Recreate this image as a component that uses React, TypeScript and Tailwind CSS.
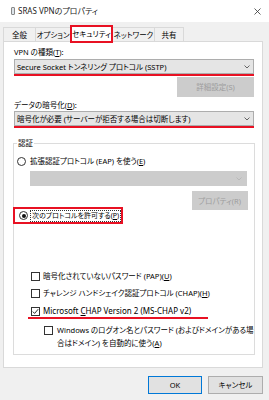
import React from 'react';

const font = "font-['Noto_Sans','Noto_Sans_CJK_JP',sans-serif] [font-feature-settings:'palt']";

function Chevron({ color = '#555' }: { color?: string }) {
  return (
    <svg width="6" height="4" viewBox="0 0 6 4" className="shrink-0">
      <polyline points="0.5,0.5 3,3 5.5,0.5" fill="none" stroke={color} strokeWidth="0.9" />
    </svg>
  );
}

function Radio({ checked = false }: { checked?: boolean }) {
  return (
    <span className="w-[9px] h-[9px] rounded-full border border-[#333] bg-white flex items-center justify-center shrink-0">
      {checked && <span className="w-[4px] h-[4px] rounded-full bg-[#111]" />}
    </span>
  );
}

function Check({ checked = false }: { checked?: boolean }) {
  return (
    <span className="w-[9px] h-[9px] border border-[#333] bg-white flex items-center justify-center shrink-0">
      {checked && (
        <svg width="7" height="7" viewBox="0 0 7 7">
          <polyline points="0.8,3.6 2.6,5.4 6.2,1.2" fill="none" stroke="#111" strokeWidth="0.9" />
        </svg>
      )}
    </span>
  );
}

const tabs = [
  { label: '全般', w: 'w-[32px]' },
  { label: 'オプション', w: 'w-[35px]' },
  { label: 'セキュリティ', w: 'w-[43px]', active: true },
  { label: 'ネットワーク', w: 'w-[41px]' },
  { label: '共有', w: 'w-[30px]' },
];

export default function App() {
  return (
    <div className={`w-[269px] h-[400px] bg-[#f0f0f0] flex flex-col text-[7.5px] leading-[12px] text-black overflow-hidden whitespace-nowrap ${font}`}>
      {/* title bar */}
      <div className="h-[22px] bg-white flex items-center shrink-0">
        <span className="ml-[11px] w-[4px] h-[8px] border border-[#888] bg-[#dde4ea] rounded-[1px]" />
        <span className="ml-[3px] text-[8px] text-[#222]">SRAS VPNのプロパティ</span>
        <svg width="7" height="7" viewBox="0 0 7 7" className="ml-auto mr-[8px]">
          <path d="M0.5 0.5 L6.5 6.5 M6.5 0.5 L0.5 6.5" stroke="#333" strokeWidth="0.8" />
        </svg>
      </div>

      {/* tabs */}
      <div className="h-[19px] flex items-end pl-[3px] shrink-0">
        {tabs.map((t, i) =>
          t.active ? (
            <div
              key={t.label}
              className={`${t.w} h-[18px] -mb-[2px] relative z-10 bg-white border-2 border-[#e81123] flex items-center justify-center`}
            >
              {t.label}
            </div>
          ) : (
            <div
              key={t.label}
              className={`${t.w} h-[14px] border-t border-[#d9d9d9] ${i === 3 ? '' : 'border-l'} ${i === tabs.length - 1 ? 'border-r' : ''} flex items-center justify-center`}
            >
              {t.label}
            </div>
          )
        )}
      </div>

      {/* panel */}
      <div className="ml-[3px] w-[260px] h-[327px] bg-white border border-[#d9d9d9] flex flex-col pl-[10px] pr-[8px] pt-[4px] shrink-0">
        <div className="h-[12px]">VPN の種類(<span className="underline">T</span>):</div>
        <div className="mt-[1px] h-[15px] bg-[#e5e5e5] border border-[#adadad] flex items-center pl-[2px] pr-[3px]">
          <span className="flex-1">Secure Socket トンネリング プロトコル (SSTP)</span>
          <Chevron />
        </div>
        <div className="h-[2px] bg-[#e81123]" />
        <div className="mt-[1px] self-end w-[77px] h-[20px] bg-[#cccccc] border border-[#cccccc] text-[#9d9d9d] flex items-center justify-center">
          詳細設定(S)
        </div>
        <div className="mt-[2px] h-[12px]">データの暗号化(<span className="underline">D</span>):</div>
        <div className="h-[15px] bg-[#e5e5e5] border border-[#adadad] flex items-center pl-[2px] pr-[3px]">
          <span className="flex-1">暗号化が必要 (サーバーが拒否する場合は切断します)</span>
          <Chevron />
        </div>
        <div className="h-[2px] bg-[#e81123]" />

        {/* 認証 group */}
        <fieldset className="mt-[9px] -ml-[1px] w-[241px] h-[218px] border border-[#dcdcdc] flex flex-col">
          <legend className="ml-[3px] px-[1px] leading-[12px]">認証</legend>
          <div className="mt-[6px] h-[12px] flex items-center gap-[4px] pl-[3px]">
            <Radio />
            <span>拡張認証プロトコル (EAP) を使う(<span className="underline">E</span>)</span>
          </div>
          <div className="mt-[4px] ml-[16px] w-[217px] h-[15px] bg-[#cccccc] border border-[#cccccc] flex items-center justify-end pr-[4px]">
            <Chevron color="#b5b5b5" />
          </div>
          <div className="mt-[5px] self-end mr-[6px] w-[56px] h-[19px] bg-[#cccccc] border border-[#cccccc] text-[#9d9d9d] flex items-center justify-center">
            プロパティ(R)
          </div>
          <div className="-mt-[3px] -ml-[1px] w-[110px] h-[17px] border-2 border-[#e81123] flex items-center gap-[2px] pl-[4px]">
            <Radio checked />
            <span className="border border-dotted border-[#333] px-[1px] leading-[10px] text-[7px]">次のプロトコルを許可する(<span className="underline">P</span>)</span>
          </div>

          <div className="mt-[46px] h-[12px] flex items-center gap-[3px] pl-[17px]">
            <Check />
            <span>暗号化されていないパスワード (PAP)(<span className="underline">U</span>)</span>
          </div>
          <div className="mt-[5px] h-[12px] flex items-center gap-[3px] pl-[17px]">
            <Check />
            <span>チャレンジ ハンドシェイク認証プロトコル (CHAP)(<span className="underline">H</span>)</span>
          </div>
          <div className="mt-[6px] ml-[14px] w-[180px] h-[14px] border-b-2 border-[#e81123] flex items-center gap-[3px] pl-[3px] text-[8px]">
            <Check checked />
            <span>Microsoft <span className="underline">C</span>HAP Version 2 (MS-CHAP v2)</span>
          </div>
          <div className="mt-[5px] flex items-start gap-[4px] pl-[30px] leading-[13px]">
            <span className="mt-[2px]"><Check /></span>
            <span>
              Windows のログオン名とパスワード (およびドメインがある場
              <br />
              合はドメイン) を自動的に使う(<span className="underline">A</span>)
            </span>
          </div>
        </fieldset>
      </div>

      {/* bottom buttons */}
      <div className="mt-[8px] flex justify-end gap-[6px] pr-[6px]">
        <div className="w-[54px] h-[18px] bg-[#e1e1e1] border border-[#0078d7] flex items-center justify-center">OK</div>
        <div className="w-[55px] h-[18px] bg-[#e1e1e1] border border-[#adadad] flex items-center justify-center">キャンセル</div>
      </div>
    </div>
  );
}
